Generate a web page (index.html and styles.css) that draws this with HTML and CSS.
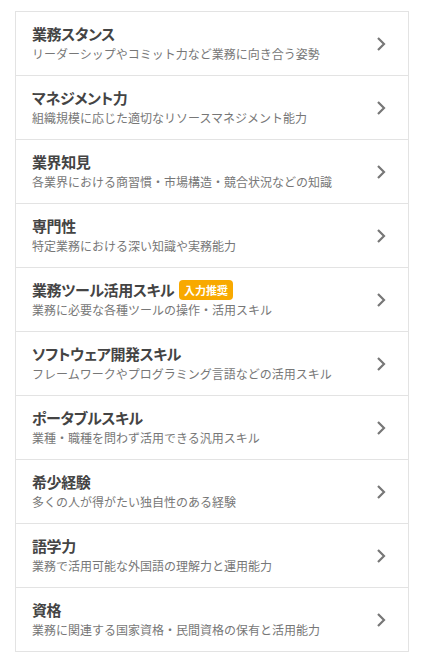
FILE: index.html
```html
<!DOCTYPE html>
<html lang="ja">
<head>
<meta charset="UTF-8" />
<meta name="viewport" content="width=device-width, initial-scale=1" />
<title>スキル一覧</title>
<link rel="stylesheet" href="styles.css">
</head>
<body>
<ul class="skill-list">
  <li class="skill-item">
    <div class="skill-text">
      <div class="skill-title">業務スタンス</div>
      <div class="skill-desc">リーダーシップやコミット力など業務に向き合う姿勢</div>
    </div>
    <svg class="chevron" viewBox="0 0 10 16" aria-hidden="true"><path d="M2 2 L8 8 L2 14" /></svg>
  </li>
  <li class="skill-item">
    <div class="skill-text">
      <div class="skill-title">マネジメント力</div>
      <div class="skill-desc">組織規模に応じた適切なリソースマネジメント能力</div>
    </div>
    <svg class="chevron" viewBox="0 0 10 16" aria-hidden="true"><path d="M2 2 L8 8 L2 14" /></svg>
  </li>
  <li class="skill-item">
    <div class="skill-text">
      <div class="skill-title">業界知見</div>
      <div class="skill-desc">各業界における商習慣・市場構造・競合状況などの知識</div>
    </div>
    <svg class="chevron" viewBox="0 0 10 16" aria-hidden="true"><path d="M2 2 L8 8 L2 14" /></svg>
  </li>
  <li class="skill-item">
    <div class="skill-text">
      <div class="skill-title">専門性</div>
      <div class="skill-desc">特定業務における深い知識や実務能力</div>
    </div>
    <svg class="chevron" viewBox="0 0 10 16" aria-hidden="true"><path d="M2 2 L8 8 L2 14" /></svg>
  </li>
  <li class="skill-item">
    <div class="skill-text">
      <div class="skill-title">業務ツール活用スキル<span class="badge">入力推奨</span></div>
      <div class="skill-desc">業務に必要な各種ツールの操作・活用スキル</div>
    </div>
    <svg class="chevron" viewBox="0 0 10 16" aria-hidden="true"><path d="M2 2 L8 8 L2 14" /></svg>
  </li>
  <li class="skill-item">
    <div class="skill-text">
      <div class="skill-title">ソフトウェア開発スキル</div>
      <div class="skill-desc">フレームワークやプログラミング言語などの活用スキル</div>
    </div>
    <svg class="chevron" viewBox="0 0 10 16" aria-hidden="true"><path d="M2 2 L8 8 L2 14" /></svg>
  </li>
  <li class="skill-item">
    <div class="skill-text">
      <div class="skill-title">ポータブルスキル</div>
      <div class="skill-desc">業種・職種を問わず活用できる汎用スキル</div>
    </div>
    <svg class="chevron" viewBox="0 0 10 16" aria-hidden="true"><path d="M2 2 L8 8 L2 14" /></svg>
  </li>
  <li class="skill-item">
    <div class="skill-text">
      <div class="skill-title">希少経験</div>
      <div class="skill-desc">多くの人が得がたい独自性のある経験</div>
    </div>
    <svg class="chevron" viewBox="0 0 10 16" aria-hidden="true"><path d="M2 2 L8 8 L2 14" /></svg>
  </li>
  <li class="skill-item">
    <div class="skill-text">
      <div class="skill-title">語学力</div>
      <div class="skill-desc">業務で活用可能な外国語の理解力と運用能力</div>
    </div>
    <svg class="chevron" viewBox="0 0 10 16" aria-hidden="true"><path d="M2 2 L8 8 L2 14" /></svg>
  </li>
  <li class="skill-item">
    <div class="skill-text">
      <div class="skill-title">資格</div>
      <div class="skill-desc">業務に関連する国家資格・民間資格の保有と活用能力</div>
    </div>
    <svg class="chevron" viewBox="0 0 10 16" aria-hidden="true"><path d="M2 2 L8 8 L2 14" /></svg>
  </li>
</ul>
</body>
</html>
```

FILE: styles.css
```css
body {
  margin: 0;
  background: #fff;
  font-family: "Noto Sans CJK JP", "Noto Sans", sans-serif;
  color: #333;
}
.skill-list {
  list-style: none;
  margin: 11px 21px 0 15px;
  padding: 0;
  border: 1px solid #e3e3e3;
}
/* one row per skill */
.skill-item {
  display: flex;
  align-items: center;
  height: 63px;
  padding: 0 22px 0 16px;
  border-top: 1px solid #e3e3e3;
}
.skill-item:first-child {
  border-top: none;
}
.skill-text {
  flex: 1;
  min-width: 0;
}
.skill-title {
  display: flex;
  align-items: center;
  font-size: 15px;
  font-weight: 700;
  line-height: 20px;
  color: #444;
  letter-spacing: -0.4px;
  font-feature-settings: "palt";
}
.skill-desc {
  margin-top: 1px;
  font-size: 12px;
  line-height: 18px;
  color: #777;
}
.badge {
  margin-left: 5px;
  padding: 0 5px;
  height: 20px;
  line-height: 20px;
  border-radius: 4px;
  background: #f8a900;
  color: #fff;
  font-size: 11px;
  font-weight: 700;
  letter-spacing: 0;
}
.chevron {
  width: 10px;
  height: 16px;
  flex: none;
}
.chevron path {
  fill: none;
  stroke: #777;
  stroke-width: 2.2;
}
```
